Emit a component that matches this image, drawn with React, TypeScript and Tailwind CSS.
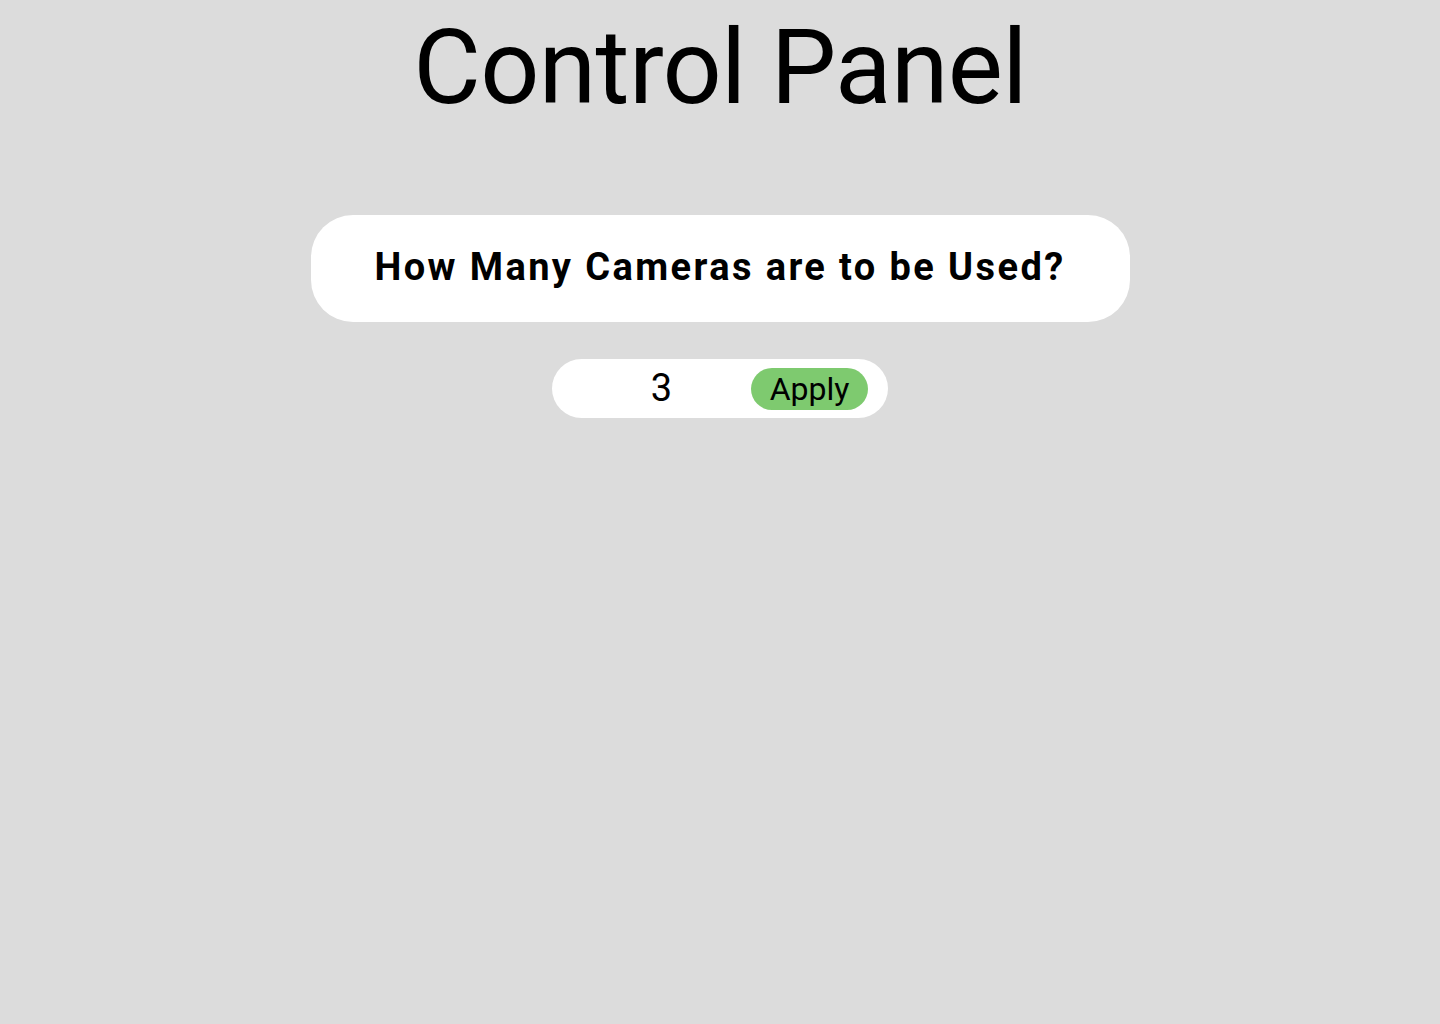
import React from "react";

export default function App() {
  return (
    <div className="min-h-[1024px] w-full bg-[#dcdcdc] flex flex-col items-center" style={{ fontFamily: "Roboto, 'Liberation Sans', sans-serif" }}>
      <h1 className="mt-[8px] text-[104px] leading-[120px] font-normal text-black tracking-[-0.7px]">Control Panel</h1>
      <div className="mt-[87px] w-[819px] h-[107px] rounded-[42px] bg-white flex items-center justify-center">
        <span className="text-[38px] font-bold text-black tracking-[2.4px] -mt-[2px]">How Many Cameras are to be Used?</span>
      </div>
      <div className="mt-[37px] w-[336px] h-[59px] rounded-full bg-white flex items-center pr-[20px]">
        <div className="flex-1 text-center text-[38px] text-black pl-[20px]">3</div>
        <button className="w-[117px] h-[42px] rounded-full bg-[#7eca6f] text-[32px] text-black leading-none flex items-center justify-center">Apply</button>
      </div>
    </div>
  );
}
